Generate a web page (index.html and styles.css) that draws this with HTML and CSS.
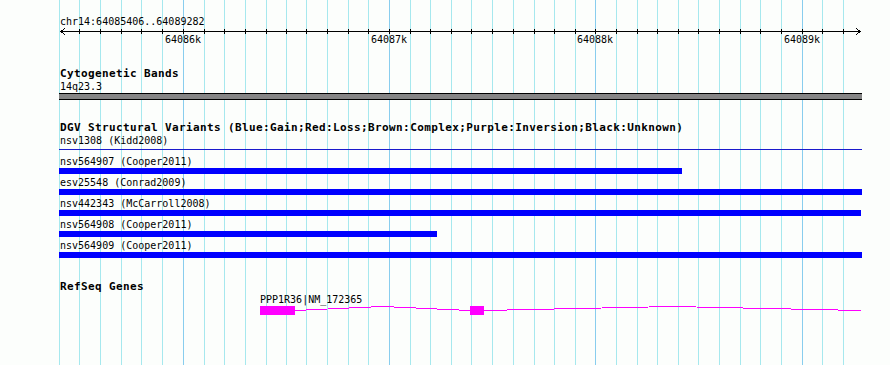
FILE: index.html
```html
<html>
  <head>
    <meta charset="utf-8" />
    <link rel="stylesheet" href="styles.css">
  </head>
  <body>
    <div class="browser">
      <svg class="grid" width="890" height="365">
        <path class="minor" d="M59.5 0V365M79.5 0V365M100.5 0V365M121.5 0V365M141.5 0V365M162.5 0V365M204.5 0V365M224.5 0V365M245.5 0V365M266.5 0V365M286.5 0V365M306.5 0V365M327.5 0V365M348.5 0V365M368.5 0V365M410.5 0V365M430.5 0V365M451.5 0V365M471.5 0V365M492.5 0V365M513.5 0V365M534.5 0V365M554.5 0V365M575.5 0V365M616.5 0V365M637.5 0V365M657.5 0V365M678.5 0V365M698.5 0V365M719.5 0V365M740.5 0V365M760.5 0V365M781.5 0V365M822.5 0V365M843.5 0V365" />
        <path class="major" d="M183.5 0V365M389.5 0V365M595.5 0V365M802.5 0V365" />
      </svg>

      <div class="tracks">
        <svg class="ruler" width="803" height="47">
          <text class="ruler-title" x="1" y="25">chr14:64085406..64089282</text>
          <path class="axis" d="M1 31.5H802M6 28.5L1.5 31.5L6 34.5M797 28.5L801.5 31.5L797 34.5" />
          <path class="axis" d="M20.5 29V34M41.5 29V34M62.5 29V34M82.5 29V34M103.5 29V34M124.5 29V34M145.5 29V34M165.5 29V34M186.5 29V34M207.5 29V34M227.5 29V34M247.5 29V34M268.5 29V34M289.5 29V34M309.5 29V34M330.5 29V34M351.5 29V34M371.5 29V34M392.5 29V34M412.5 29V34M433.5 29V34M454.5 29V34M475.5 29V34M495.5 29V34M516.5 29V34M536.5 29V34M557.5 29V34M578.5 29V34M598.5 29V34M619.5 29V34M639.5 29V34M660.5 29V34M681.5 29V34M701.5 29V34M722.5 29V34M743.5 29V34M763.5 29V34M784.5 29V34" />
          <text class="tick-label" x="124" y="43">64086k</text>
          <text class="tick-label" x="330" y="43">64087k</text>
          <text class="tick-label" x="536" y="43">64088k</text>
          <text class="tick-label" x="743" y="43">64089k</text>
        </svg>

        <section class="track cyto">
          <div class="track-title">Cytogenetic Bands</div>
          <div class="label">14q23.3</div>
          <div class="band"></div>
        </section>

        <section class="track dgv">
          <div class="track-title">DGV Structural Variants (Blue:Gain;Red:Loss;Brown:Complex;Purple:Inversion;Black:Unknown)</div>
          <div class="label">nsv1308 (Kidd2008)</div>
          <div class="divider"></div>
          <div class="features">
            <div class="feature">
              <div class="label">nsv564907 (Cooper2011)</div>
              <div class="bar" style="width: 623px"></div>
            </div>
            <div class="feature">
              <div class="label">esv25548 (Conrad2009)</div>
              <div class="bar" style="width: 803px"></div>
            </div>
            <div class="feature">
              <div class="label">nsv442343 (McCarroll2008)</div>
              <div class="bar" style="width: 802px"></div>
            </div>
            <div class="feature">
              <div class="label">nsv564908 (Cooper2011)</div>
              <div class="bar" style="width: 378px"></div>
            </div>
            <div class="feature">
              <div class="label">nsv564909 (Cooper2011)</div>
              <div class="bar" style="width: 803px"></div>
            </div>
          </div>
        </section>

        <section class="track refseq">
          <div class="track-title">RefSeq Genes</div>
          <div class="label gene-label">PPP1R36|NM_172365</div>
          <svg class="gene" width="803" height="10">
            <rect class="exon" x="201" y="0" width="35" height="9" />
            <rect class="exon" x="411" y="0" width="14" height="9" />
            <polyline class="intron" points="236,4.5 323.5,0.5 411,4.5" />
            <polyline class="intron" points="425,4.5 613.5,0.5 802,4.5" />
          </svg>
        </section>
      </div>
    </div>
  </body>
</html>
```

FILE: styles.css
```css
body {
  margin: 0;
  background: #fcfefc;
}
.browser {
  position: relative;
  width: 890px;
  height: 365px;
  overflow: hidden;
  background: #fcfefc;
  color: #000000;
  font-family: "DejaVu Sans Mono", "Liberation Mono", monospace;
}
.grid {
  position: absolute;
  left: 0;
  top: 0;
}
.grid path {
  stroke-width: 1;
  shape-rendering: crispEdges;
}
.grid .minor {
  stroke: #a6e8ee;
}
.grid .major {
  stroke: #88cdee;
}
.tracks {
  position: relative;
  margin-left: 59px;
  width: 803px;
}
.ruler {
  display: block;
}
.ruler text {
  font-family: "DejaVu Sans Mono", "Liberation Mono", monospace;
  font-size: 10px;
  fill: #000000;
}
.ruler .tick-label {
  text-anchor: middle;
}
.axis {
  fill: none;
  stroke: #000000;
  stroke-width: 1;
  shape-rendering: crispEdges;
}
.track-title {
  font-size: 11px;
  font-weight: bold;
  line-height: 13px;
  letter-spacing: 0.38px;
  padding-left: 1px;
  white-space: nowrap;
}
.label {
  font-size: 10px;
  line-height: 13px;
  padding-left: 1px;
  white-space: nowrap;
}
.cyto {
  padding-top: 20px;
}
.band {
  height: 5px;
  background: #858585;
  border-top: 1px solid #000000;
  border-bottom: 1px solid #000000;
}
.dgv {
  padding-top: 21px;
}
.divider {
  height: 1px;
  margin-top: 2px;
  background: #1a1acc;
}
.features {
  padding-top: 5px;
}
.feature .bar {
  height: 6px;
  margin-bottom: 2px;
  background: #0000ff;
}
.refseq {
  padding-top: 20px;
}
.gene-label {
  margin-left: 201px;
  padding-left: 0;
}
.gene {
  display: block;
}
.exon {
  fill: #ff00ff;
}
.intron {
  fill: none;
  stroke: #ff00ff;
  stroke-width: 1;
  shape-rendering: crispEdges;
}
```
